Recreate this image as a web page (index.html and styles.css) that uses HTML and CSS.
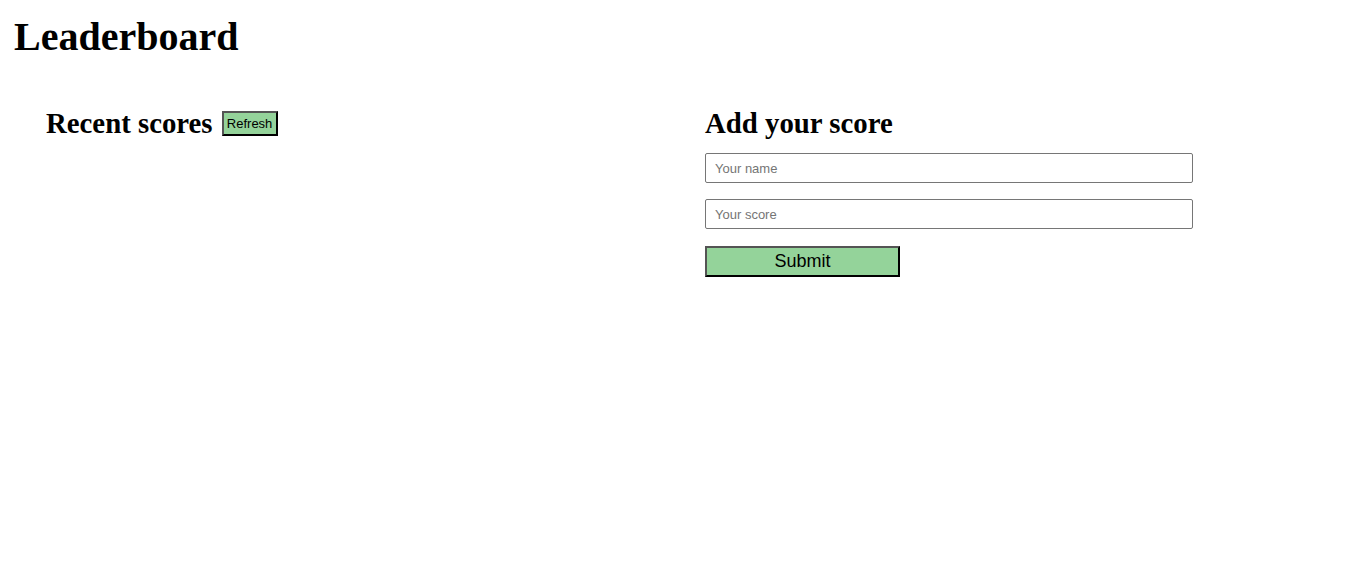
FILE: index.html
```html
<!DOCTYPE html>
<html>
<head>
<meta charset="utf-8">
<title>Leaderboard</title>
<link rel="stylesheet" href="styles.css">
</head>
<body>
<div class="page">
  <h1 class="title">Leaderboard</h1>
  <div class="columns">
    <section class="col">
      <div class="scores-head">
        <h2 class="heading">Recent scores</h2>
        <button class="btn refresh">Refresh</button>
      </div>
    </section>
    <section class="col">
      <h2 class="heading form-heading">Add your score</h2>
      <form class="score-form">
        <input class="field" type="text" placeholder="Your name">
        <input class="field" type="text" placeholder="Your score">
        <button class="btn submit" type="button">Submit</button>
      </form>
    </section>
  </div>
</div>
</body>
</html>
```

FILE: styles.css
```css
html, body {
  margin: 0;
  padding: 0;
  background: #fff;
}

.page {
  padding: 0 14px;
  font-family: "Liberation Serif", "Times New Roman", serif;
  color: #000;
}

.title {
  font-size: 40px;
  font-weight: bold;
  margin: 14px 0 0;
  line-height: 46px;
}

.columns {
  display: grid;
  grid-template-columns: 1fr 1fr;
  column-gap: 49px;
  padding: 47px 32px 0;
}

.heading {
  font-size: 28.8px;
  font-weight: bold;
  margin: 0;
  line-height: 33px;
}

.scores-head {
  display: flex;
  align-items: center;
  gap: 9px;
}

.form-heading {
  margin-bottom: 13px;
}

.score-form {
  display: flex;
  flex-direction: column;
  align-items: flex-start;
}

.field {
  box-sizing: border-box;
  width: 80%;
  height: 30px;
  margin: 0 0 16px;
  padding: 0 9px;
  border: 1px solid #767676;
  border-radius: 2px;
  font-family: "Liberation Sans", Arial, sans-serif;
  font-size: 13px;
  color: #000;
  background: #fff;
}

.field::placeholder {
  color: #757575;
}

.btn {
  box-sizing: border-box;
  background: #94d39a;
  border: 2px outset #000;
  font-family: "Liberation Sans", Arial, sans-serif;
  color: #000;
  margin: 0;
  cursor: pointer;
}

.refresh {
  height: 25px;
  width: 56px;
  padding: 0;
  font-size: 13px;
}

.submit {
  width: 32%;
  height: 31px;
  margin-top: 1px;
  padding: 0;
  font-size: 18px;
}
```
